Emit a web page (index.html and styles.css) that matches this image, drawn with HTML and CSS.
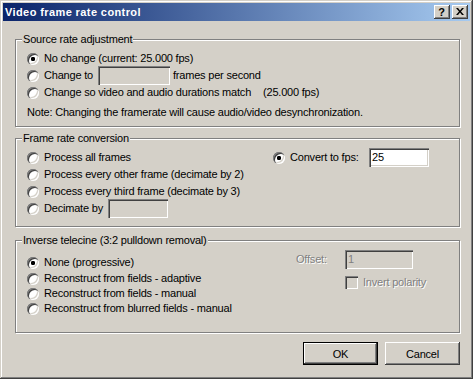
FILE: index.html
```html
<!DOCTYPE html>
<html>
<head>
<meta charset="utf-8">
<title>Video frame rate control</title>
<link rel="stylesheet" href="styles.css">
</head>
<body>
<div class="window">
  <div class="titlebar">
    <span class="title">Video frame rate control</span>
    <div class="tbtns">
      <span class="tbtn help">?</span>
      <span class="tbtn close"><svg width="8" height="7" viewBox="0 0 8 7"><path d="M0 0h2l2 2.5L6 0h2L5 3.5 8 7H6L4 4.5 2 7H0l3-3.5z" fill="#000"/></svg></span>
    </div>
  </div>
  <div class="content">
    <div class="group g1">
      <div class="gtitle">Source rate adjustment</div>
      <div class="rows">
        <div class="row"><span class="radio on"></span><span class="lbl">No change (current: 25.000 fps)</span></div>
        <div class="row"><span class="radio"></span><span class="lbl w-change">Change to</span><span class="edit disabled w72"></span><span class="lbl after">frames per second</span></div>
        <div class="row"><span class="radio"></span><span class="lbl w-match">Change so video and audio durations match</span><span class="lbl">(25.000 fps)</span></div>
      </div>
      <div class="note">Note: Changing the framerate will cause audio/video desynchronization.</div>
    </div>

    <div class="group g2">
      <div class="gtitle">Frame rate conversion</div>
      <div class="cols">
        <div class="rows left2">
          <div class="row"><span class="radio"></span><span class="lbl">Process all frames</span></div>
          <div class="row"><span class="radio"></span><span class="lbl">Process every other frame (decimate by 2)</span></div>
          <div class="row"><span class="radio"></span><span class="lbl">Process every third frame (decimate by 3)</span></div>
          <div class="row"><span class="radio"></span><span class="lbl w-dec">Decimate by</span><span class="edit disabled w60"></span></div>
        </div>
        <div class="rows">
          <div class="row"><span class="radio on"></span><span class="lbl w-conv">Convert to fps:</span><span class="edit w60b">25</span></div>
        </div>
      </div>
    </div>

    <div class="group g3">
      <div class="gtitle">Inverse telecine (3:2 pulldown removal)</div>
      <div class="cols">
        <div class="rows left3">
          <div class="row first"><span class="radio on"></span><span class="lbl">None (progressive)</span></div>
          <div class="row"><span class="radio"></span><span class="lbl">Reconstruct from fields - adaptive</span></div>
          <div class="row"><span class="radio"></span><span class="lbl">Reconstruct from fields - manual</span></div>
          <div class="row"><span class="radio"></span><span class="lbl">Reconstruct from blurred fields - manual</span></div>
        </div>
        <div class="right3">
          <div class="offrow"><span class="lbl dis w-off">Offset:</span><span class="edit disabled w68 distext">1</span></div>
          <div class="chkrow"><span class="check"></span><span class="lbl dis">Invert polarity</span></div>
        </div>
      </div>
    </div>

    <div class="buttons">
      <div class="btn default"><span class="btn-in">OK</span></div>
      <div class="btn"><span class="btn-in">Cancel</span></div>
    </div>
  </div>
</div>
</body>
</html>
```

FILE: styles.css
```css
* { box-sizing: border-box; }
html, body { margin: 0; padding: 0; background: #d4d0c8; }
body {
  font-family: "Liberation Sans", Arial, sans-serif;
  font-size: 11px;
  letter-spacing: -0.2px;
  color: #000;
}
.window {
  width: 473px;
  height: 379px;
  padding: 3px;
  background: #d4d0c8;
  box-shadow: inset -1px -1px 0 #404040, inset 1px 1px 0 #d4d0c8, inset -2px -2px 0 #808080, inset 2px 2px 0 #fff;
  display: flex;
  flex-direction: column;
}
.titlebar {
  height: 18px;
  background: linear-gradient(to right, #0a246a, #a6caf0);
  display: flex;
  align-items: center;
  justify-content: space-between;
  padding: 0 2px 0 2px;
}
.title {
  color: #fff;
  font-weight: bold;
  font-size: 11px;
  line-height: 13px;
  letter-spacing: 0.4px;
}
.tbtns { display: flex; gap: 2px; }
.tbtn {
  width: 16px;
  height: 14px;
  background: #d4d0c8;
  box-shadow: inset -1px -1px 0 #404040, inset 1px 1px 0 #fff, inset -2px -2px 0 #808080;
  display: flex;
  align-items: center;
  justify-content: center;
  font-weight: bold;
  font-size: 11px;
  line-height: 14px;
  letter-spacing: 0;
}
.tbtn.help { padding-bottom: 1px; padding-right: 1px; }
.tbtn.close svg { display: block; margin-top: -1px; margin-left: -1px; }

.content {
  padding: 18px 0 0 12px;
  display: flex;
  flex-direction: column;
}
.group {
  width: 445px;
  border: 1px solid #808080;
  box-shadow: inset 1px 1px 0 #fff, 1px 1px 0 #fff;
  padding: 0 0 0 11px;
  display: flex;
  flex-direction: column;
}
.g1 { height: 88px; }
.g2 { height: 89px; margin-top: 11px; }
.g3 { height: 93px; margin-top: 13px; }
.gtitle {
  align-self: flex-start;
  margin: -7px 0 0 -5px;
  padding: 0 1px;
  line-height: 13px;
  height: 13px;
  background: #d4d0c8;
  white-space: nowrap;
}
.rows { display: flex; flex-direction: column; margin-top: 4px; }
.row {
  height: 17px;
  display: flex;
  align-items: center;
  white-space: nowrap;
}
.lbl { line-height: 13px; white-space: nowrap; }
.radio {
  width: 12px;
  height: 12px;
  flex: none;
  border-radius: 50%;
  background: #fff;
  box-shadow: inset 1px 1px 0 #808080, inset 2px 2px 0 #404040, inset -1px -1px 0 #fff, inset -2px -2px 0 #d4d0c8;
  margin-right: 5px;
}
.radio.on {
  background: radial-gradient(circle at 6px 6px, #000 0, #000 2px, #fff 2.3px);
}
.edit {
  height: 19px;
  flex: none;
  background: #fff;
  box-shadow: inset 1px 1px 0 #808080, inset 2px 2px 0 #404040, inset -1px -1px 0 #fff, inset -2px -2px 0 #d4d0c8;
  line-height: 19px;
  padding-left: 3px;
}
.edit.disabled { background: #d4d0c8; }
.w72 { width: 72px; }
.w60 { width: 60px; }
.w60b { width: 60px; }
.w68 { width: 68px; }
.w-change { width: 54px; }
.after { margin-left: 3px; }
.w-match { width: 219px; }
.w-dec { width: 64px; }
.w-conv { width: 79px; }
.note { margin-top: 5px; line-height: 13px; white-space: nowrap; }

.cols { display: flex; align-items: flex-start; }
.left2 { width: 246px; }
.left3 { width: 269px; margin-top: 7px; }
.left3 .row { height: 15px; }
.left3 .row.first { height: 17px; }
.right3 { display: flex; flex-direction: column; margin-top: 3px; }
.offrow { display: flex; align-items: center; }
.w-off { width: 49px; }
.dis { color: #808080; text-shadow: 1px 1px 0 #fff; }
.distext { color: #808080; }
.chkrow { display: flex; align-items: center; margin-top: 7px; padding-left: 49px; }
.check {
  width: 13px;
  height: 13px;
  flex: none;
  background: #d4d0c8;
  box-shadow: inset 1px 1px 0 #808080, inset 2px 2px 0 #404040, inset -1px -1px 0 #fff, inset -2px -2px 0 #d4d0c8;
  margin-right: 5px;
}

.buttons {
  display: flex;
  justify-content: flex-end;
  gap: 7px;
  width: 445px;
  margin-top: 9px;
}
.btn {
  width: 75px;
  height: 23px;
  display: flex;
}
.btn-in {
  flex: 1;
  background: #d4d0c8;
  box-shadow: inset -1px -1px 0 #404040, inset 1px 1px 0 #fff, inset -2px -2px 0 #808080;
  display: flex;
  align-items: center;
  justify-content: center;
  padding-top: 1px;
}
.btn.default { border: 1px solid #000; }
```
